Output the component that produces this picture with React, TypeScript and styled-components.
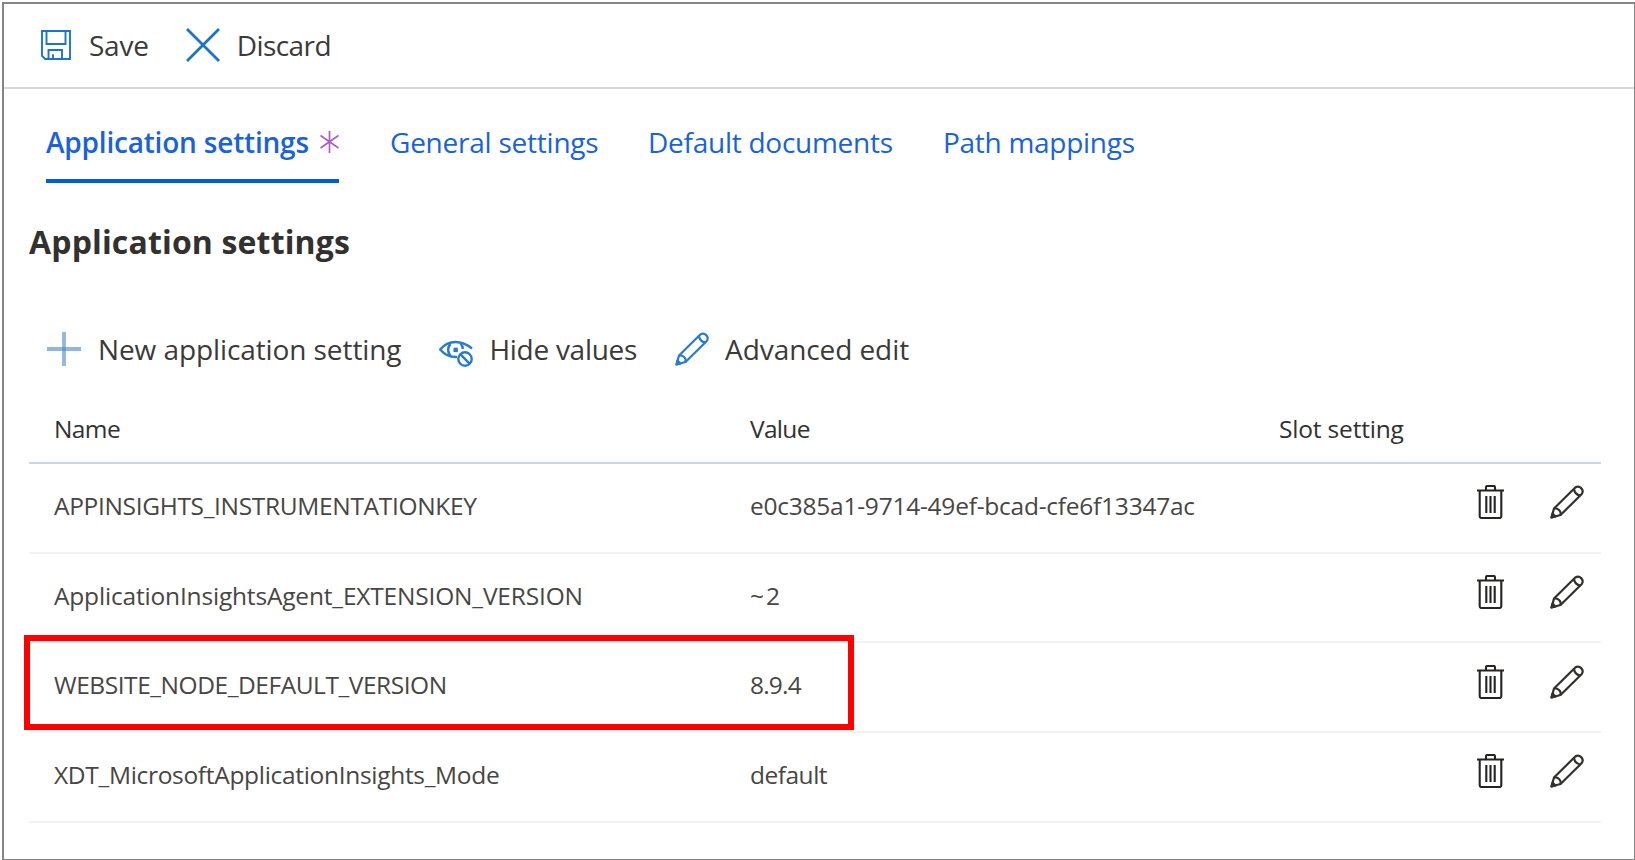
import React from 'react';
import styled, { createGlobalStyle } from 'styled-components';

const GlobalStyle = createGlobalStyle`
  *, *::before, *::after { box-sizing: border-box; }
  body { margin: 0; background: #fff; overflow: hidden; }
`;

const Page = styled.div`
  height: 860px;
  padding: 2px 0 0 2px;
  font-family: 'Open Sans', 'Noto Sans', sans-serif;
  color: #3b3a39;
`;

const Frame = styled.main`
  height: 100%;
  border: 2px solid #858585;
  border-right-width: 1px;
  border-bottom-width: 1px;
  background: #fff;
`;

const Text = styled.span<{ $track?: number }>`
  white-space: nowrap;
  letter-spacing: ${(p) => p.$track ?? 0}px;
`;

const CommandBar = styled.header`
  display: flex;
  align-items: center;
  gap: 37px;
  height: 85px;
  padding: 0 0 1px 37px;
  border-bottom: 2px solid #d9d9d9;
`;

const Command = styled.button<{ $gap: number }>`
  display: flex;
  align-items: center;
  gap: ${(p) => p.$gap}px;
  padding: 0;
  border: 0;
  background: none;
  color: #3b3a39;
  font: 400 28px/36px 'Open Sans', 'Noto Sans', sans-serif;

  svg { flex: none; display: block; }
`;

const Tabs = styled.nav`
  display: flex;
  height: 94px;
  padding-left: 42px;
`;

const Tab = styled.a<{ $active?: boolean; $width: number }>`
  display: flex;
  align-items: center;
  justify-content: space-between;
  width: ${(p) => p.$width}px;
  margin-right: 51px;
  padding-top: 15px;
  border-bottom: 4px solid ${(p) => (p.$active ? '#015cda' : 'transparent')};
  color: #1a62dc;
  font-size: 28px;
  line-height: 36px;
  font-weight: ${(p) => (p.$active ? 600 : 400)};
`;

const Heading = styled.h1`
  margin: 36px 0 0 25px;
  font-size: 32px;
  line-height: 46px;
  font-weight: 700;
  color: #323130;
`;

const Actions = styled.div`
  display: flex;
  align-items: center;
  height: 40px;
  margin-top: 64px;
  padding-left: 43px;
  gap: 38px;
`;

const Table = styled.div`
  margin: 34px 33px 0 25px;
`;

const Row = styled.div<{ $head?: boolean }>`
  position: relative;
  display: grid;
  grid-template-columns: 696px 529px 1fr auto;
  align-items: center;
  height: ${(p) => (p.$head ? 61 : 89.7)}px;
  padding: ${(p) => (p.$head ? '0 17px 8px 25px' : '0 17px 4px 25px')};
  border-bottom: 2px solid ${(p) => (p.$head ? '#cbd6e2' : '#f2f2f2')};
  color: ${(p) => (p.$head ? '#323130' : '#484644')};
  font-size: 24.5px;
  line-height: 36px;
`;

const RowActions = styled.div`
  display: flex;
  align-items: center;
  gap: 46px;
  padding-bottom: 7px;

  svg { display: block; }
`;

const Highlight = styled.div`
  position: absolute;
  left: -5px;
  top: -8px;
  width: 830px;
  height: 95px;
  border: 6px solid #ff0000;
`;

const SaveIcon = () => (
  <svg width="30" height="30" viewBox="0 0 30 30" fill="none" stroke="#1c74c8" strokeWidth="1.9">
    <path d="M1 1h28v28H4.200L1 25.800zM5.500 1v13h19V1M7.500 29v-9h13.500v9M12 24.200V29" />
  </svg>
);

const DiscardIcon = () => (
  <svg width="34" height="34" viewBox="0 0 34 34" fill="none" stroke="#1c74c8" strokeWidth="2.8">
    <path d="M1 1l32 32M33 1L1 33" />
  </svg>
);

const PlusIcon = () => (
  <svg width="34" height="34" viewBox="0 0 34 34" fill="none" stroke="#4686cc" strokeOpacity=".6" strokeWidth="3.8">
    <path d="M17 0v34" />
    <path d="M0 17h34" />
  </svg>
);

const HideIcon = () => (
  <svg width="34" height="35" viewBox="0 0 34 35" fill="none" stroke="#2a7bcb" strokeWidth="2.4">
    <path d="M18 25C9.500 25.500 4.500 21.500 1.200 17.500 5 12.800 10.500 10 16.500 10S28 12.500 33 16.500" />
    <path d="M11.500 12C8.300 15 8.300 21 12 24.200M21.500 11.500c2 2 2.500 3.500 2.300 5.500" />
    <rect x="14.500" y="15.700" width="4.400" height="4.400" fill="#2a7bcb" stroke="none" />
    <circle cx="26" cy="27" r="6.700" />
    <path d="M21.200 22.200l9.600 9.600" />
  </svg>
);

const PencilIcon = ({ color }: { color: string }) => (
  <svg width="34" height="34" viewBox="0 0 34 34" fill="none" stroke={color} strokeWidth="2.2" strokeLinejoin="round">
    <path d="M1.500 32.500L4 23.500 25.300 2.500a4.700 4.700 0 0 1 6.500 6.500L10.500 30z" />
    <path d="M4 23.500c3.800-.5 7.500 2.500 6.500 6.500M24 4c.5 4 3 6 6.500 6.500" />
    <path d="M1.500 32.500l1-4 3 3z" fill={color} />
  </svg>
);

const TrashIcon = () => (
  <svg width="27" height="34" viewBox="0 0 27 34" fill="none" stroke="#252423" strokeWidth="2.100">
    <path d="M0 5.500h27M9 5.500V2.200Q9 1 10.200 1h6.600Q18 1 18 2.200v3.300M2.700 5.500V31.300q0 1.700 1.700 1.700h18.200q1.700 0 1.700-1.700V5.500" />
    <path d="M9.300 11v17M13.500 11v17M17.700 11v17" />
  </svg>
);

const ModifiedIcon = () => (
  <svg width="19" height="22" viewBox="0 0 19 22" fill="none" stroke="#ab5fc0" strokeWidth="1.700">
    <path d="M9.500 0v22M.5 4.500l18 12.500M18.500 4.500L.5 17" />
  </svg>
);

const settings = [
  { name: 'APPINSIGHTS_INSTRUMENTATIONKEY', nameTrack: -0.33, value: 'e0c385a1-9714-49ef-bcad-cfe6f13347ac', valueTrack: -0.24 },
  { name: 'ApplicationInsightsAgent_EXTENSION_VERSION', nameTrack: -0.18, value: '~2', valueTrack: 2 },
  { name: 'WEBSITE_NODE_DEFAULT_VERSION', nameTrack: -0.45, value: '8.9.4', valueTrack: -0.8, highlighted: true },
  { name: 'XDT_MicrosoftApplicationInsights_Mode', nameTrack: -0.31, value: 'default', valueTrack: -0.5 },
];

export default function App() {
  return (
    <Page>
      <GlobalStyle />
      <Frame>
        <CommandBar>
          <Command $gap={18}><SaveIcon /><Text $track={-0.25}>Save</Text></Command>
          <Command $gap={17}><DiscardIcon /><Text $track={-0.55}>Discard</Text></Command>
        </CommandBar>
        <Tabs>
          <Tab $active $width={293}><Text $track={-0.2}>Application settings</Text><ModifiedIcon /></Tab>
          <Tab $width={207}><Text $track={-0.23}>General settings</Text></Tab>
          <Tab $width={244}><Text $track={-0.26}>Default documents</Text></Tab>
          <Tab $width={192}><Text $track={-0.28}>Path mappings</Text></Tab>
        </Tabs>
        <Heading><Text $track={0.15}>Application settings</Text></Heading>
        <Actions>
          <Command $gap={17}><PlusIcon /><Text $track={-0.09}>New application setting</Text></Command>
          <Command $gap={16}><HideIcon /><Text $track={-0.28}>Hide values</Text></Command>
          <Command $gap={16}><PencilIcon color="#2a7bcb" /><Text $track={-0.08}>Advanced edit</Text></Command>
        </Actions>
        <Table>
          <Row $head>
            <Text $track={-0.6}>Name</Text>
            <Text $track={-0.7}>Value</Text>
            <Text $track={-0.18}>Slot setting</Text>
          </Row>
          {settings.map((s) => (
            <Row key={s.name}>
              <Text $track={s.nameTrack}>{s.name}</Text>
              <Text $track={s.valueTrack}>{s.value}</Text>
              <span />
              <RowActions><TrashIcon /><PencilIcon color="#323130" /></RowActions>
              {s.highlighted && <Highlight />}
            </Row>
          ))}
        </Table>
      </Frame>
    </Page>
  );
}
